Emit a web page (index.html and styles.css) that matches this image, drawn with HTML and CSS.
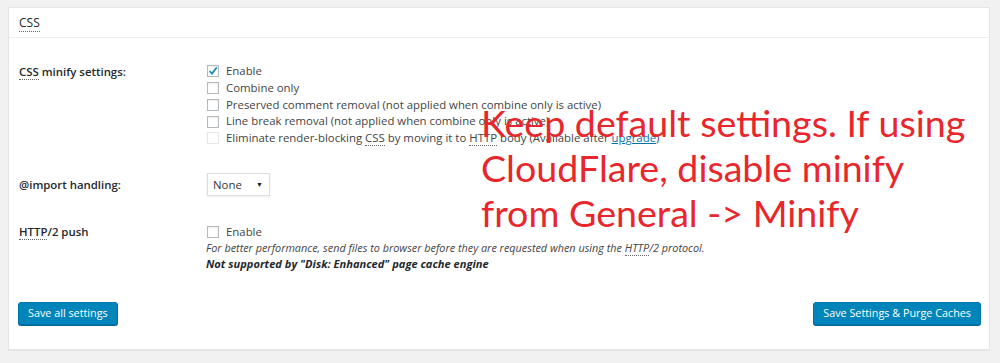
FILE: index.html
```html
<!DOCTYPE html>
<html>
<head>
<meta charset="utf-8">
<link rel="stylesheet" href="styles.css">
</head>
<body>
<div class="panel">
  <div class="panel-head"><abbr>CSS</abbr></div>
  <div class="panel-body">
    <div class="row row-minify">
      <div class="label"><abbr>CSS</abbr> minify settings:</div>
      <div class="control lines">
        <label class="check"><span class="box checked"><svg viewBox="0 0 12 12" width="12" height="12"><path d="M2.6 6.2 L5 8.6 L9.8 2.4" fill="none" stroke="#1e8cbe" stroke-width="1.8"/></svg></span><span class="text">Enable</span></label>
        <label class="check"><span class="box"></span><span class="text">Combine only</span></label>
        <label class="check"><span class="box"></span><span class="text">Preserved comment removal (not applied when combine only is active)</span></label>
        <label class="check"><span class="box"></span><span class="text">Line break removal (not applied when combine only is active)</span></label>
        <label class="check disabled"><span class="box"></span><span class="text">Eliminate render-blocking <abbr>CSS</abbr> by moving it to <abbr>HTTP</abbr> body (Available after <a href="#">upgrade</a>)</span></label>
      </div>
    </div>
    <div class="row row-import">
      <div class="label">@import handling:</div>
      <div class="control">
        <div class="select"><span>None</span><span class="arrow">&#9660;</span></div>
      </div>
    </div>
    <div class="row row-push">
      <div class="label"><abbr>HTTP</abbr>/2 push</div>
      <div class="control lines-tight">
        <label class="check"><span class="box"></span><span class="text">Enable</span></label>
        <p class="desc">For better performance, send files to browser before they are requested when using the <abbr>HTTP</abbr>/2 protocol.</p>
        <p class="desc strong">Not supported by "Disk: Enhanced" page cache engine</p>
      </div>
    </div>
    <div class="actions">
      <button class="btn">Save all settings</button>
      <button class="btn">Save Settings &amp; Purge Caches</button>
    </div>
  </div>
  <div class="note">Keep default settings. If using<br>CloudFlare, disable minify<br>from General -&gt; Minify</div>
</div>
</body>
</html>
```
FILE: styles.css
```css
html, body {
  margin: 0;
  padding: 0;
}
body {
  background: #f1f1f1;
  padding: 7px 10px 11px 8px;
  font-family: "Open Sans", "Noto Sans", sans-serif;
  font-size: 11.4px;
  color: #444;
}
.panel {
  position: relative;
  background: #fff;
  border: 1px solid #e5e5e5;
  box-shadow: 0 1px 1px rgba(0,0,0,0.04);
}
abbr {
  text-decoration: none;
  border-bottom: 1px dotted #666;
}
.panel-head {
  height: 30px;
  box-sizing: border-box;
  border-bottom: 1px solid #eee;
  padding: 6px 0 0 10px;
  font-size: 12px;
  color: #23282d;
  line-height: 17px;
}
.panel-body {
  padding: 25px 8px 24px 8px;
}
.row {
  display: grid;
  grid-template-columns: 188px 1fr;
  padding-left: 2px;
}
.label {
  font-weight: 600;
  color: #23282d;
  font-size: 11.4px;
}
.row-minify .label {
  padding-top: 1px;
  line-height: 16.75px;
}
.lines {
  line-height: 16.75px;
}
.check {
  display: flex;
  align-items: center;
  white-space: nowrap;
}
.box {
  display: inline-block;
  width: 12px;
  height: 12px;
  box-sizing: border-box;
  border: 1px solid #b4b9be;
  background: #fff;
  box-shadow: inset 0 1px 2px rgba(0,0,0,0.07);
  margin-right: 7px;
  position: relative;
  flex: none;
}
.box svg {
  position: absolute;
  left: -1px;
  top: -1px;
}
.disabled .box {
  border-color: #e6e7e8;
  box-shadow: none;
}
a {
  color: #0073aa;
}
.row-import {
  margin-top: 26px;
  align-items: center;
}
.select {
  width: 63px;
  height: 23px;
  box-sizing: border-box;
  border: 1px solid #ddd;
  box-shadow: 0 1px 2px rgba(0,0,0,0.07);
  display: flex;
  align-items: center;
  justify-content: space-between;
  padding: 0 6px 0 5px;
  color: #32373c;
  line-height: 1;
}
.arrow {
  font-size: 7px;
  color: #222;
}
.row-push {
  margin-top: 28px;
  line-height: 16px;
}
.lines-tight {
  line-height: 16px;
}
.desc {
  margin: 0;
  font-style: italic;
  font-size: 10.85px;
  color: #444;
  white-space: nowrap;
  margin-left: -1px;
}
.desc.strong {
  font-size: 11.1px;
  font-weight: 700;
  color: #23282d;
}
.actions {
  display: flex;
  justify-content: space-between;
  margin-top: 30px;
  padding-left: 1px;
}
.btn {
  font-family: "Open Sans", "Noto Sans", sans-serif;
  font-size: 10.8px;
  color: #fff;
  background: #0085ba;
  border: 1px solid #0073aa;
  border-radius: 3px;
  box-shadow: 0 1px 0 #006799;
  height: 23px;
  padding: 0 9px 1px;
  cursor: pointer;
}
.note {
  position: absolute;
  left: 472px;
  top: 92px;
  font-family: Lato, sans-serif;
  font-size: 37.6px;
  line-height: 45px;
  color: #e8262b;
  white-space: nowrap;
}
```
